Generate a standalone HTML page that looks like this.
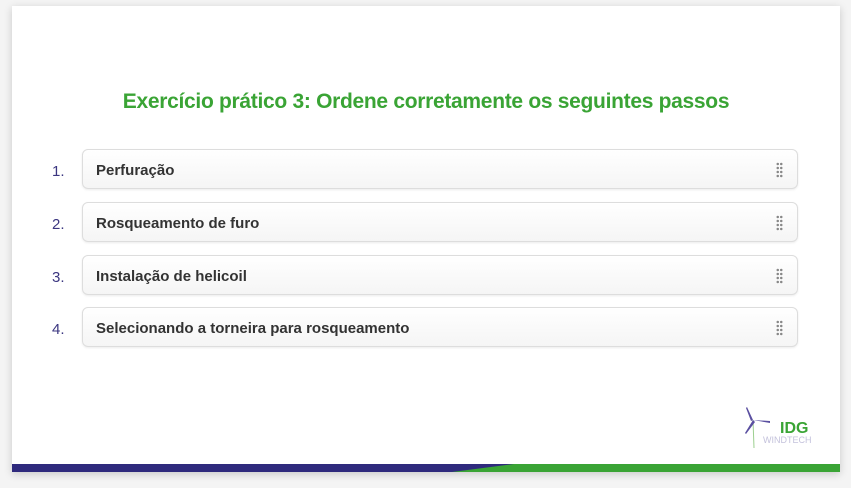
<!DOCTYPE html><html><head><style>
body{margin:0;width:851px;height:488px;background:#f4f4f4;position:relative;overflow:hidden;font-family:"Liberation Sans",sans-serif}
.slide{position:absolute;left:12px;top:6px;width:828px;height:466px;background:#fff;box-shadow:0 2px 8px rgba(0,0,0,.18)}
h1{position:absolute;left:0;right:0;top:84px;margin:0;text-align:center;font-size:21px;color:#3aa435;font-weight:bold;letter-spacing:-0.3px}
.n{position:absolute;left:40px;width:30px;font-size:15px;color:#3b3680}
.b{position:absolute;left:70px;width:714px;height:38px;border:1px solid #ddd;border-radius:6px;background:linear-gradient(#fff,#f5f5f5);box-shadow:0 1px 2px rgba(0,0,0,.08);font-weight:bold;font-size:15px;color:#333;line-height:42px;text-indent:13px}
.g{position:absolute;right:14px;top:12px;width:7px;height:16px;background:radial-gradient(circle,#888 1.1px,transparent 1.4px) 0 0/3.5px 4px}
.bar{position:absolute;left:0;bottom:0;width:828px;height:8px;background:#3aa435}
.bar2{position:absolute;left:0;bottom:0;width:828px;height:8px;background:#2f2a7d;clip-path:polygon(0 0,502px 0,440px 100%,0 100%)}
</style></head><body><div class="slide">
<h1>Exercício prático 3: Ordene corretamente os seguintes passos</h1>
<div class="n" style="top:157px">1.</div><div class="b" style="top:143px">Perfuração<div class="g"></div></div>
<div class="n" style="top:210px">2.</div><div class="b" style="top:196px">Rosqueamento de furo<div class="g"></div></div>
<div class="n" style="top:263px">3.</div><div class="b" style="top:249px">Instalação de helicoil<div class="g"></div></div>
<div class="n" style="top:315px">4.</div><div class="b" style="top:301px">Selecionando a torneira para rosqueamento<div class="g"></div></div>
<svg style="position:absolute;left:708px;top:384px" width="110" height="70">
<line x1="33" y1="30" x2="34" y2="58" stroke="#9ccf8f" stroke-width="1"/>
<path d="M33 30 L27 17 L26 18 L31 31 Z M33 30 L25 43 L26 44 L35 32 Z M33 30 L50 33 L50 31 Z" fill="#5a4fa0"/>
<text x="60" y="43" font-size="16" font-weight="bold" fill="#3aa435" font-family="Liberation Sans">IDG</text>
<text x="43" y="53" font-size="9" fill="#c4c2dc" font-family="Liberation Sans">WINDTECH</text>
</svg>
<div class="bar"></div><div class="bar2"></div>
</div></body></html>
